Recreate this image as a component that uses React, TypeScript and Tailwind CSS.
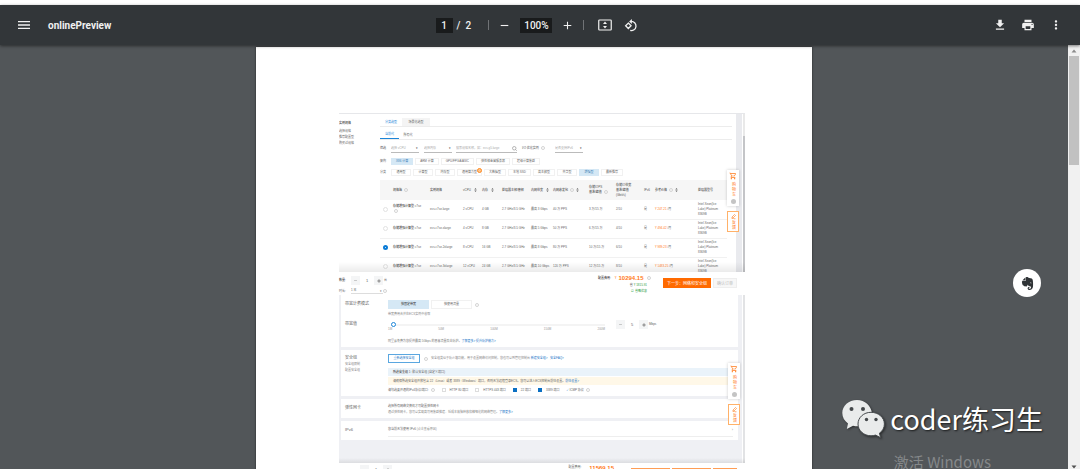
import { useState } from "react";
import type { ReactNode } from "react";
import {
  MdAdd,
  MdFileDownload,
  MdMenu,
  MdMoreVert,
  MdOutlineShoppingCart,
  MdPrint,
  MdRemove,
} from "react-icons/md";
import { FaEvernote } from "react-icons/fa";

const ARCHS = ["X86 计算", "ARM 计算", "GPU/FPGA/ASIC", "弹性裸金属服务器", "超级计算集群"];
const KINDS = [
  "通用型",
  "计算型",
  "内存型",
  "通用算力型",
  "大数据型",
  "本地 SSD",
  "高主频型",
  "共享型",
  "增强型",
  "最新推荐",
];

const ROWS = [
  { spec: "ecs.c7se.large", cpu: "2 vCPU", mem: "4 GB", net: "最高 3 Gbps", pps: "40 万 PPS", iops: "3 万/15 万", io: "2/10", price: "247.21" },
  { spec: "ecs.c7se.xlarge", cpu: "4 vCPU", mem: "8 GB", net: "最高 5 Gbps", pps: "50 万 PPS", iops: "6 万/15 万", io: "4/10", price: "494.42" },
  { spec: "ecs.c7se.2xlarge", cpu: "8 vCPU", mem: "16 GB", net: "最高 8 Gbps", pps: "80 万 PPS", iops: "10 万/15 万", io: "6/10", price: "989.23" },
  { spec: "ecs.c7se.3xlarge", cpu: "12 vCPU", mem: "24 GB", net: "最高 10 Gbps", pps: "120 万 PPS", iops: "12 万/15 万", io: "8/10", price: "1483.25" },
];

function Hint() {
  return <span className="ml-px inline-block size-[4px] shrink-0 rounded-full border border-[#d4d4d4] align-middle" />;
}

function Sort() {
  return (
    <svg viewBox="0 0 6 10" className="ml-[2px] inline-block h-[4px] w-[3px] align-middle" fill="#666">
      <path d="M3 0l3 4H0zM3 10l3-4H0z" />
    </svg>
  );
}

function FitIcon() {
  return (
    <svg viewBox="0 0 28 24" className="h-[12px] w-[14px]" fill="none" stroke="#f1f1f1" strokeWidth="2.4">
      <rect x="1.5" y="2" width="25" height="20" rx="1.5" />
      <path d="M14 5l4 5h-8zM14 19l4-5h-8z" fill="#f1f1f1" stroke="none" />
    </svg>
  );
}

function RotateIcon() {
  return (
    <svg viewBox="0 0 24 24" className="size-[13px]" fill="none" stroke="#f1f1f1" strokeWidth="2.4">
      <path d="M8 7.500l5 5-5 5-5-5z" />
      <path d="M13 4.500a8.500 8.500 0 1 1-1.500 16.700" />
      <path d="M14.500 0v9L9.500 4.500z" fill="#f1f1f1" stroke="none" />
    </svg>
  );
}

function WechatIcon() {
  return (
    <svg viewBox="0 0 43 38" className="h-[38px] w-[43px] drop-shadow-[1px_1px_1px_rgba(0,0,0,0.5)]">
      <path
        fill="#e9ebeb"
        d="M15 0C6.700 0 .3 5.700.3 13c0 4.300 2.200 8 5.700 10.400L4.800 29l6.200-3.300c1.600.4 3.200.5 5 .5l14-13C29 5.700 23 0 15 0z"
      />
      <path
        fill="#e9ebeb"
        stroke="#44484b"
        strokeWidth="1"
        d="M29 12.300c-7.300 0-13 5.200-13 11.700s5.700 11.800 13 11.800c1.600 0 3.100-.2 4.500-.7l5.200 2.600-1.300-4.500c3.100-2.100 5-5.400 5-9.200 0-6.500-5.900-11.700-13.400-11.700z"
      />
      <circle cx="9.500" cy="9" r="2" fill="#44484b" />
      <circle cx="21" cy="9" r="2" fill="#44484b" />
      <circle cx="24.500" cy="19.500" r="1.700" fill="#44484b" />
      <circle cx="34" cy="19.500" r="1.700" fill="#44484b" />
    </svg>
  );
}

function Toolbar() {
  return (
    <header className="z-10 grid h-[40px] shrink-0 grid-cols-[1fr_auto_1fr] items-center bg-[#323639] pr-[17px] pl-[10px] font-['Roboto',sans-serif] text-[10px] font-medium text-[#f1f1f1] shadow-[0_1px_3px_rgba(0,0,0,0.5)]">
      <div className="ml-[6px] flex items-center gap-[16px]">
        <button aria-label="Menu">
          <MdMenu className="size-[16px]" />
        </button>
        <h1 className="font-bold">onlinePreview</h1>
      </div>
      <div className="flex items-center">
        <input aria-label="Page" defaultValue="1" className="h-[15px] w-[17px] bg-[#191b1c] text-center" />
        <span className="ml-[4px]">/</span>
        <span className="ml-[5px] w-[7px]">2</span>
        <span className="ml-[16px] h-[10px] w-px bg-[#707376]" />
        <button aria-label="Zoom out" className="ml-[9px]">
          <MdRemove className="size-[13px]" />
        </button>
        <input aria-label="Zoom" defaultValue="100%" className="ml-[9px] h-[15px] w-[32px] bg-[#191b1c] text-center" />
        <button aria-label="Zoom in" className="ml-[9px]">
          <MdAdd className="size-[13px]" />
        </button>
        <span className="ml-[9px] h-[10px] w-px bg-[#707376]" />
        <button aria-label="Fit to page" className="ml-[14px]">
          <FitIcon />
        </button>
        <button aria-label="Rotate" className="ml-[12px]">
          <RotateIcon />
        </button>
      </div>
      <div className="flex items-center justify-end gap-[14px]">
        <button aria-label="Download">
          <MdFileDownload className="size-[14px]" />
        </button>
        <button aria-label="Print">
          <MdPrint className="size-[14px]" />
        </button>
        <button aria-label="More">
          <MdMoreVert className="size-[14px]" />
        </button>
      </div>
    </header>
  );
}

function Options({ label, items, active, onPick }: { label: string; items: string[]; active: string; onPick: (v: string) => void }) {
  return (
    <div className="mt-[4px] flex h-[7px] items-center">
      <span className="w-[11px]">{label}</span>
      <div className="flex h-full gap-[2px]">
        {items.map((item) => (
          <button
            key={item}
            onClick={() => onPick(item)}
            className={`relative min-w-[20px] border px-[4px] whitespace-nowrap ${item === active ? "border-[#d5e8f5] bg-[#d5e8f5] text-[#3d7fb5]" : "border-[#f1f1f1] bg-white"}`}
          >
            {item}
            {item === "通用算力型" && <span className="absolute -top-[2px] -right-px size-[5px] rounded-full border border-[#ff8a1f] bg-[#ffc48a]" />}
          </button>
        ))}
      </div>
    </div>
  );
}

function SideTools({ className }: { className: string }) {
  return (
    <aside className={`absolute flex w-[12px] flex-col gap-[5px] text-[4px] text-[#ff7a1a] ${className}`}>
      <button className="flex h-[36px] flex-col items-center justify-between bg-white py-[2px] shadow-[0_0_3px_rgba(0,0,0,0.2)]">
        <MdOutlineShoppingCart className="size-[8px]" />
        <span className="leading-[4px] [writing-mode:vertical-rl]">购 物 车</span>
        <span className="size-[5px] rounded-full bg-[#c4c4c4]" />
      </button>
      <button className="flex h-[21px] flex-col items-center justify-center gap-px border border-[#ffb169] bg-white">
        <svg viewBox="0 0 10 10" className="size-[5px]" fill="none" stroke="#ff7a1a" strokeWidth="1.2">
          <path d="M2 6l5-5 2 2-5 5H2zM1 9.500h8" />
        </svg>
        <span className="leading-[4px] [writing-mode:vertical-rl]">反 馈</span>
      </button>
    </aside>
  );
}

function SpecTable() {
  const [picked, setPicked] = useState(2);
  return (
    <table className="mt-[4px] w-[347px] table-fixed text-left leading-[5px]">
      <colgroup>
        <col className="w-[13px]" />
        <col className="w-[37px]" />
        <col className="w-[33px]" />
        <col className="w-[19px]" />
        <col className="w-[20px]" />
        <col className="w-[29px]" />
        <col className="w-[22px]" />
        <col className="w-[36px]" />
        <col className="w-[27px]" />
        <col className="w-[28px]" />
        <col className="w-[11px]" />
        <col className="w-[43px]" />
        <col className="w-[29px]" />
      </colgroup>
      <thead>
        <tr className="h-[20px] bg-[#f6f6f6] text-[#555] [&>th]:p-0 [&>th]:font-medium [&>th]:whitespace-nowrap">
          <th />
          <th>规格族 <Hint /></th>
          <th>实例规格</th>
          <th>vCPU <Sort /></th>
          <th>内存 <Sort /></th>
          <th>处理器主频/睿频</th>
          <th>内网带宽 <Sort /></th>
          <th>内网收发包 <Hint /><Sort /></th>
          <th>存储IOPS<br />基准/峰值 <Hint /></th>
          <th>存储IO带宽<br />基准/峰值<br />(Gbit/s)</th>
          <th>IPv6</th>
          <th>参考价格 <Hint /><Sort /></th>
          <th>处理器型号</th>
        </tr>
      </thead>
      <tbody>
        {ROWS.map((row, i) => (
          <tr key={row.spec} className="h-[19px] border-b border-[#f1f1f1] [&>td]:p-0">
            <td>
              <input
                type="radio"
                name="spec"
                aria-label={row.spec}
                checked={picked === i}
                onChange={() => setPicked(i)}
                className="ml-[3px] block size-[5px] appearance-none rounded-full border border-[#e2e2e2] bg-white checked:border-2 checked:border-[#0a7bd6]"
              />
            </td>
            <td className="whitespace-nowrap">
              <b className="font-medium text-[#444]">存储增强计算型</b> c7se
              {i === 0 && <><br /><Hint /></>}
            </td>
            <td>{row.spec}</td>
            <td className="whitespace-nowrap">{row.cpu}</td>
            <td>{row.mem}</td>
            <td className="whitespace-nowrap">2.7 GHz/3.5 GHz</td>
            <td>{row.net}</td>
            <td>{row.pps}</td>
            <td>{row.iops}</td>
            <td>{row.io}</td>
            <td>是</td>
            <td><span className="text-[#ff7a1a]">¥ {row.price}</span> /月</td>
            <td className="whitespace-nowrap">Intel Xeon(Ice<br />Lake) Platinum<br />8369B</td>
          </tr>
        ))}
      </tbody>
    </table>
  );
}

function SpecPicker() {
  const [arch, setArch] = useState("X86 计算");
  const [kind, setKind] = useState("增强型");
  return (
    <section className="relative flex h-[159px] overflow-hidden border-t border-[#e6e7ea]">
      <nav className="flex w-[41px] shrink-0 flex-col pt-[7px] leading-[6px]">
        <h2 className="mb-[2px] font-medium leading-[5px] text-[#444]">实例规格</h2>
        <a href="#scene">选择规格</a>
        <a href="#config">推荐配置型</a>
        <a href="#history">购买过规格</a>
      </nav>
      <div className="w-[352px] shrink-0 pt-[4px]">
        <div className="flex h-[9px] border-b border-[#ececec]">
          <button className="w-[22px] text-[#1c85d8]">分类选型</button>
          <button className="w-[28px] bg-[#f4f4f4]">场景化选型</button>
        </div>
        <div className="flex h-[13px] gap-[4px] border-b border-[#ececec] pt-[4px]">
          <button className="w-[19px] border-b border-[#1c85d8] text-[#1c85d8]">当前代</button>
          <button className="w-[10px]">所有代</button>
        </div>
        <div className="mt-[3px] flex h-[11px] items-center text-[#aaa]">
          <span className="w-[11px] text-[#555]">筛选</span>
          <select aria-label="vCPU" className="h-[9px] w-[28px] appearance-none border-b border-[#bbb]">
            <option>选择 vCPU</option>
          </select>
          <span className="-ml-[3px] w-[8px] text-[#333]">▾</span>
          <select aria-label="内存" className="h-[9px] w-[28px] appearance-none border-b border-[#bbb]">
            <option>选择内存</option>
          </select>
          <span className="-ml-[3px] w-[7px] text-[#333]">▾</span>
          <input
            aria-label="搜索规格名称"
            placeholder="搜索规格名称，如：ecs.g5.large"
            className="h-[9px] w-[61px] border-b border-[#bbb] placeholder:text-[#aaa]"
          />
          <svg viewBox="0 0 10 10" className="-ml-[5px] size-[5px]" fill="none" stroke="#888" strokeWidth="1.200">
            <path d="M7 7l2.500 2.500M8 4.500a3.500 3.500 0 1 1-7 0a3.500 3.500 0 0 1 7 0z" />
          </svg>
          <span className="ml-[5px] w-[33px] whitespace-nowrap text-[#555]">I/O 优化实例 <Hint /></span>
          <select aria-label="IPv6" className="h-[9px] w-[28px] appearance-none border-b border-[#bbb]">
            <option>是否支持IPv6</option>
          </select>
          <span className="-ml-[3px] text-[#333]">▾</span>
        </div>
        <Options label="架构" items={ARCHS} active={arch} onPick={setArch} />
        <Options label="分类" items={KINDS} active={kind} onPick={setKind} />
        <SpecTable />
      </div>
      <div className="ml-[4px] w-[6px] bg-[#e9eaee]" />
      <div className="ml-px w-[2px] bg-[#e9e9e9] pt-[22px]">
        <div className="h-full bg-[#c4c5c8]" />
      </div>
      <div className="absolute bottom-0 left-0 h-[10px] w-full bg-linear-to-t from-black/8 to-transparent" />
      <SideTools className="top-[56px] left-[388px]" />
    </section>
  );
}

function Stepper({ label, value }: { label: string; value: string }) {
  return (
    <div className="flex h-[9px] w-[32px] items-stretch bg-[#f4f5f6] text-[4px]">
      <button aria-label={`${label}减少`} className="flex w-[9px] items-center justify-center">
        <MdRemove className="size-[5px] text-[#888]" />
      </button>
      <input aria-label={label} defaultValue={value} className="w-[14px] bg-white text-center" />
      <button aria-label={`${label}增加`} className="flex w-[9px] items-center justify-center">
        <MdAdd className="size-[6px] text-[#333]" />
      </button>
    </div>
  );
}

function OrderBar() {
  return (
    <section className="flex h-[23px] justify-between bg-white pr-[8px]">
      <div className="flex flex-col gap-[3px] pt-[4px]">
        <div className="flex items-center">
          <span className="w-[12px] font-medium text-[#444]">数量:</span>
          <Stepper label="数量" value="1" />
          <span className="ml-px">台</span>
        </div>
        <div className="flex h-[6px] items-center">
          <label htmlFor="term" className="w-[12px]">时长:</label>
          <select id="term" className="h-full w-[32px] appearance-none border-b border-[#ddd]">
            <option>1 年</option>
          </select>
          <span className="-ml-[3px]">▾</span>
          <Hint />
        </div>
      </div>
      <div className="flex">
        <div className="flex w-[54px] flex-col items-end">
          <div className="flex h-[10px] w-full items-center gap-[2px] pt-[2px] whitespace-nowrap">
            <span className="font-medium text-[#333]">配置费用:</span>
            <span className="ml-[2px] text-[#ff6a00]">¥</span>
            <b className="text-[6px] leading-[7px] text-[#ff7a1a]">10294.15</b>
            <Hint />
          </div>
          <p className="pr-[5px] leading-[6px] text-[#2f9e44]"><span className="text-[#555]">省</span> ¥ 1815.91</p>
          <p className="pr-[5px] leading-[6px] text-[#2f9e44]">☑ 省略优惠</p>
        </div>
        <button className="mt-[6px] ml-[11px] h-[10px] w-[48px] bg-[#ff6a00] text-[4px] whitespace-nowrap text-white">下一步：网络和安全组</button>
        <button className="mt-[6px] ml-[2px] h-[10px] w-[24px] border border-[#eee] bg-[#f7f7f7] text-[4px] whitespace-nowrap text-[#bbb]">确认订单</button>
      </div>
    </section>
  );
}

function Panel({ title, links, className, children }: { title: string; links?: string[]; className: string; children: ReactNode }) {
  return (
    <div className={`flex bg-white pl-[4px] ${className}`}>
      <div className="w-[43px] shrink-0">
        <h3 className="text-[4px] leading-[7px]">{title}</h3>
        {links?.map((l) => (
          <a key={l} href="#group" className="block leading-[6px] text-[#888]">{l}</a>
        ))}
      </div>
      <div className="min-w-0 flex-1 whitespace-nowrap">{children}</div>
    </div>
  );
}

function Port({ label, on }: { label: string; on?: boolean }) {
  return (
    <label className="flex items-center gap-[4px]">
      <input
        type="checkbox"
        defaultChecked={on}
        className="size-[4px] appearance-none border border-[#ddd] checked:border-[#0a6fc2] checked:bg-[#0a6fc2]"
      />
      {label}
    </label>
  );
}

function NetworkForm() {
  return (
    <section className="relative flex h-[168px]">
      <div className="flex w-[403px] flex-col gap-[3px] bg-[#eff0f4] pr-[4px] pl-[2px]">
        <Panel title="带宽计费模式" className="h-[52px] pt-[5px]">
          <div className="flex h-[9px] items-center gap-[2px]">
            <button className="h-full w-[41px] bg-[#d5e8f5] text-[#333]">按固定带宽</button>
            <button className="h-full w-[41px] border border-[#f1f1f1]">按使用流量</button>
            <Hint />
          </div>
          <p className="mt-[3px] leading-[5px] text-[#888]">带宽费用合并在ECS实例中收取</p>
          <div className="-ml-[43px] mt-[3px] flex h-[13px]">
            <label htmlFor="bandwidth" className="w-[43px] text-[4px] leading-[7px]">带宽值</label>
            <div className="w-[217px] text-[#999]">
              <input
                id="bandwidth"
                type="range"
                defaultValue={0}
                className="mx-[3px] mt-[2px] block h-[5px] w-[214px] appearance-none bg-linear-to-b from-transparent via-[#e9e9e9] to-transparent bg-size-[100%_2px] bg-center bg-no-repeat [&::-webkit-slider-thumb]:size-[5px] [&::-webkit-slider-thumb]:appearance-none [&::-webkit-slider-thumb]:rounded-full [&::-webkit-slider-thumb]:border [&::-webkit-slider-thumb]:border-[#1c85d8] [&::-webkit-slider-thumb]:bg-white"
              />
              <div className="flex justify-between leading-[5px]">
                <span>1M</span>
                <span>50M</span>
                <span>100M</span>
                <span>150M</span>
                <span>200M</span>
              </div>
            </div>
            <div className="ml-[11px] flex h-[9px] items-center">
              <Stepper label="带宽" value="5" />
              <span className="ml-px">Mbps</span>
            </div>
          </div>
          <p className="mt-[6px] leading-[5px] text-[#777]">
            阿里云免费为您提供最高 5Gbps 的恶意流量攻击防护。<a href="#more" className="text-[#1c75c8]">了解更多&gt; 提升防护能力&gt;</a>
          </p>
        </Panel>
        <Panel title="安全组" links={["安全组限制", "配置安全组"]} className="h-[46px] pt-[4px]">
          <div className="flex h-[9px] items-center">
            <button className="mr-[3px] h-full w-[32px] border border-[#5aa7e0] text-[#1c75c8]">重新选择安全组</button>
            <Hint />
            <p className="ml-[3px] text-[#888]">
              安全组类似于防火墙功能，用于设置网络访问控制，您也可以到管理控制台 <a href="#new" className="text-[#1c75c8]">新建安全组&gt; &nbsp; 安全FAQ&gt;</a>
            </p>
          </div>
          <div className="mt-[5px] mr-[6px] bg-[#eaf3fa] pl-[5px] leading-[8px]">
            <b className="font-bold">所选安全组</b> 1: 默认安全组 (自定义端口)
          </div>
          <div className="mt-px mr-[6px] bg-[#fff8e8] pl-[5px] leading-[8px]">
            请确保所选安全组开放包含 22（Linux）或者 3389（Windows）端口，否则无法远程登录ECS。您可以进入ECS控制台前往设置。<a href="#go" className="text-[#1c75c8]">前往设置&gt;</a>
          </div>
          <div className="mt-[2px] flex h-[6px] items-center gap-[7px]">
            <span>请勾选要开通的IPv4协议/端口: <Hint /></span>
            <Port label="HTTP 80 端口" />
            <Port label="HTTPS 443 端口" />
            <Port label="22 端口" on />
            <Port label="3389 端口" on />
            <span><span className="text-[#1c75c8]">✓</span> ICMP 协议 <Hint /></span>
          </div>
        </Panel>
        <Panel title="弹性网卡" className="h-[19px] pt-[5px]">
          <p className="leading-[5px]">选择所有网络交换机才可配置弹性网卡</p>
          <p className="mt-px leading-[5px] text-[#888]">
            通过弹性网卡，您可以实现高可用集群搭建、低成本故障转移和精细化的网络管理。<a href="#eni" className="text-[#1c75c8]">了解更多&gt;</a>
          </p>
        </Panel>
        <Panel title="IPv6" className="h-[19px] pt-[5px]">
          <div className="mr-[5px] flex h-[11px] justify-between border-b border-[#eee] leading-[7px]">
            <p>您当前无法使用 IPv6 <span className="text-[#999]">(点击查看原因)</span></p>
            <span className="text-[4px] text-[#999]">›</span>
          </div>
        </Panel>
      </div>
      <div className="ml-px w-[2px] bg-[#e2e3e5]" />
      <div className="absolute bottom-0 left-0 h-[5px] w-full bg-linear-to-t from-black/8 to-transparent" />
      <SideTools className="top-[68px] left-[389px]" />
    </section>
  );
}

function NextOrder() {
  return (
    <section className="flex items-start pt-[2px] pl-[21px]">
      <Stepper label="台数" value="1" />
      <span className="ml-auto">配置费用:</span>
      <b className="mr-[17px] ml-[8px] text-[6px] leading-[7px] text-[#ff7a1a]">11569.15</b>
      <div className="mt-[3px] mr-[8px] flex gap-[2px]">
        <button aria-label="上一步" className="h-[10px] w-[39px] bg-[#ff9d55]" />
        <button aria-label="下一步" className="h-[10px] w-[39px] bg-[#ff9d55]" />
        <button aria-label="确认订单" className="h-[10px] w-[24px] bg-[#ff9d55]" />
      </div>
    </section>
  );
}

export default function App() {
  return (
    <div className="flex h-screen flex-col overflow-hidden bg-white pt-[5px] font-['Liberation_Sans','Noto_Sans_CJK_SC',sans-serif]">
      <Toolbar />
      <div className="relative flex min-h-0 flex-1 bg-[#525659]">
        <main className="min-w-0 flex-1 overflow-hidden pt-[2px]">
          <article className="mx-auto w-[556px] bg-white px-[83px] pt-[66px] pb-[80px] shadow-[0_0_2px_rgba(0,0,0,0.6)]">
            <div className="w-[406px] text-[3px] leading-[5px] text-[#666]">
              <SpecPicker />
              <OrderBar />
              <NetworkForm />
              <NextOrder />
            </div>
          </article>
        </main>
        <div className="flex w-[12px] shrink-0 flex-col items-center bg-[#f1f1f1]">
          <svg viewBox="0 0 6 11" className="h-[11px] w-[6px] shrink-0" fill="#8b8b8b">
            <path d="M3 4.500l2.500 3h-5z" />
          </svg>
          <div className="h-[109px] w-[10px] bg-[#c1c1c1]" />
          <svg viewBox="0 0 6 4" className="mt-auto h-[4px] w-[6px]" fill="#505050">
            <path d="M3 3.500l2.500-3h-5z" />
          </svg>
        </div>
        <button
          aria-label="Evernote"
          className="absolute top-[224px] right-[39px] flex size-[28px] items-center justify-center rounded-full bg-white text-[#2f3336]"
        >
          <FaEvernote className="size-[15px]" />
        </button>
        <div className="absolute right-[37px] bottom-[29px] flex items-center gap-[5px] font-['Noto_Sans_CJK_SC',sans-serif]">
          <WechatIcon />
          <p className="text-[27px] leading-[42px] text-white [text-shadow:1px_1px_2px_rgba(0,0,0,0.7)]">coder练习生</p>
        </div>
        <p className="absolute right-[89px] -bottom-[4px] font-['Noto_Sans_CJK_SC',sans-serif] text-[15px] leading-[22px] text-[#85888a]">
          激活 Windows
        </p>
      </div>
    </div>
  );
}
